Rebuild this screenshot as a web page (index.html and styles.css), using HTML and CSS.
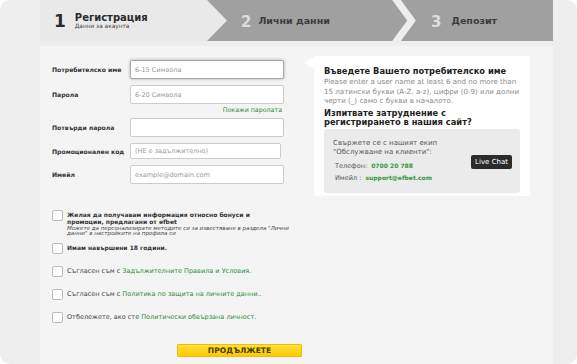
FILE: index.html
```html
<!DOCTYPE html>
<html lang="bg">
<head>
    <meta charset="UTF-8">
    <meta name="viewport" content="width=device-width, initial-scale=1.0">
    <title>Регистрация</title>
    <link rel="stylesheet" href="styles.css">
</head>
<body>
    <div class="modal">
        <div class="wrap">
            <div class="steps">
                <div class="step step-active">
                    <span class="num">1</span>
                    <div>
                        <div class="step-title">Регистрация</div>
                        <div class="step-sub">Данни за акаунта</div>
                    </div>
                </div>
                <div class="step step-two">
                    <span class="num">2</span>
                    <span class="step-title">Лични данни</span>
                </div>
                <svg class="sep" width="26" height="41" viewBox="0 0 26 41">
                    <polyline points="5,-2 21.5,20.5 5,43" fill="none" stroke="#eeeeee" stroke-width="7"/>
                </svg>
                <div class="step step-three">
                    <span class="num">3</span>
                    <span class="step-title">Депозит</span>
                </div>
            </div>

            <div class="panel">
                <div class="top">
                    <div class="fields">
                        <div class="row">
                            <label>Потребителско име</label>
                            <input type="text" class="focused" placeholder="6-15 Символа">
                        </div>
                        <div class="row row-tight">
                            <label>Парола</label>
                            <input type="password" placeholder="6-20 Символа">
                        </div>
                        <div class="show-pass">Покажи паролата</div>
                        <div class="row">
                            <label>Потвърди парола</label>
                            <input type="password">
                        </div>
                        <div class="row">
                            <label>Промоционален код</label>
                            <input type="text" class="short" placeholder="(НЕ е задължително)">
                        </div>
                        <div class="row">
                            <label>Имейл</label>
                            <input type="text" placeholder="example@domain.com">
                        </div>
                    </div>

                    <div class="hint">
                        <h3>Въведете Вашето потребителско име</h3>
                        <p class="hint-text">Please enter a user name at least 6 and no more than 15 латински букви (A-Z, a-z), цифри (0-9) или долни черти (_) само с букви в началото.</p>
                        <h3 class="help-title">Изпитвате затруднение с регистрирането в нашия сайт?</h3>
                        <div class="contact">
                            <div class="contact-info">
                                <p>Свържете се с нашият екип<br>"Обслужване на клиенти":</p>
                                <div class="contact-line">Телефон: <b>0700 20 788</b></div>
                                <div class="contact-line">Имейл : <b>support@efbet.com</b></div>
                            </div>
                            <button class="chat">Live Chat</button>
                        </div>
                    </div>
                </div>

                <div class="checks">
                    <div class="check check-long">
                        <span class="box"></span>
                        <div>
                            <div class="strong">Желая да получавам информация относно бонуси и промоции, предлагани от efbet</div>
                            <div class="note">Можете да персонализирате методите си за известяване в раздела "Лични данни" в настройките на профила си</div>
                        </div>
                    </div>
                    <div class="check">
                        <span class="box"></span>
                        <div class="strong">Имам навършени 18 години.</div>
                    </div>
                    <div class="check">
                        <span class="box"></span>
                        <div>Съгласен съм с <a href="#">Задължителните Правила и Условия.</a></div>
                    </div>
                    <div class="check">
                        <span class="box"></span>
                        <div>Съгласен съм с <a href="#">Политика по защита на личните данни..</a></div>
                    </div>
                    <div class="check">
                        <span class="box"></span>
                        <div>Отбележете, ако сте <a href="#">Политически обвързана личност.</a></div>
                    </div>
                </div>

                <div class="actions">
                    <button class="continue">ПРОДЪЛЖЕТЕ</button>
                </div>
            </div>
        </div>
    </div>
</body>
</html>
```

FILE: styles.css
```css
body {
    margin: 0;
    padding: 0;
    background-color: #ffffff;
    font-family: 'DejaVu Sans', Verdana, sans-serif;
    color: #333333;
}

.modal {
    display: flex;
    width: 577px;
    height: 364px;
    box-sizing: border-box;
    padding: 0 24px 0 40px;
    background-color: #eeeeee;
    border-radius: 10px;
    overflow: hidden;
}

.wrap {
    flex: 1;
    display: flex;
    flex-direction: column;
}

/* steps header */
.steps {
    display: flex;
    height: 41px;
    margin-bottom: 5px;
    background-color: #a0a0a0;
}

.step {
    display: flex;
    align-items: center;
    box-sizing: border-box;
}

.step-active {
    width: 187px;
    padding-left: 14px;
    background-color: #e9e9e9;
    clip-path: polygon(0 0, 167px 0, 187px 50%, 167px 100%, 0 100%);
}

.step-two {
    width: 163px;
    padding-left: 14px;
}

.step-three {
    flex: 1;
    padding-left: 15px;
}

.sep {
    display: block;
}

.num {
    font-size: 15px;
    font-weight: bold;
    color: #dddddd;
    margin-right: 7px;
    padding-top: 3px;
}

.step-three .num {
    margin-right: 10px;
}

.step-active .num {
    color: #2b2b2b;
    font-size: 17px;
    margin-right: 9px;
    padding-top: 0;
}

.step-title {
    font-size: 9.5px;
    font-weight: bold;
    color: #3b3b3b;
}

.step-active .step-title {
    font-size: 10px;
    color: #2b2b2b;
}

.step-sub {
    font-size: 5.8px;
    color: #444444;
}

/* form panel */
.panel {
    flex: 1;
    background-color: #f4f4f4;
    padding: 14px 0 0 12px;
}

.top {
    display: flex;
    align-items: flex-start;
}

.fields {
    width: 232px;
}

.row {
    display: flex;
    align-items: center;
    margin-bottom: 6px;
}

.row-tight {
    margin-bottom: 0;
}

.row label {
    width: 78px;
    font-size: 6.1px;
    font-weight: bold;
    color: #333333;
}

.row input {
    width: 154px;
    height: 19px;
    box-sizing: border-box;
    padding: 0 4px;
    border: 1px solid #cccccc;
    border-radius: 2px;
    background-color: #ffffff;
    font-family: 'DejaVu Sans', Verdana, sans-serif;
    font-size: 6.5px;
    color: #333333;
}

.row input::placeholder {
    color: #9a9a9a;
}

.row input.focused {
    border-color: #aaaaaa;
    box-shadow: 0 0 3px rgba(0, 0, 0, 0.35);
}

.row input.short {
    width: 151px;
    height: 16px;
}

.show-pass {
    text-align: right;
    font-size: 6.3px;
    color: #2e8b3a;
    padding: 2px 2px 0 0;
    height: 10px;
    margin-bottom: 2px;
}

/* hint box */
.hint {
    position: relative;
    width: 216px;
    box-sizing: border-box;
    margin: -4px 0 0 30px;
    padding: 10px 10px 3px 10px;
    background-color: #ffffff;
}

.hint::before {
    content: "";
    position: absolute;
    left: -10px;
    top: 1px;
    border-style: solid;
    border-width: 6px 10px 6px 0;
    border-color: transparent #ffffff transparent transparent;
}

.hint h3 {
    margin: 0;
    font-size: 8.3px;
    color: #222222;
}

.hint-text {
    margin: 1px 0 3px;
    font-size: 7.1px;
    line-height: 9.5px;
    color: #8a8a8a;
}

.help-title {
    line-height: 9.5px;
}

.contact {
    display: flex;
    align-items: center;
    justify-content: space-between;
    margin-top: 1px;
    padding: 10px 8px 9px 9px;
    background-color: #ebebeb;
    border-radius: 3px;
}

.contact p {
    margin: 0 0 3px;
    font-size: 7px;
    line-height: 9px;
    color: #555555;
}

.contact-line {
    font-size: 6.5px;
    line-height: 11px;
    color: #555555;
    padding-left: 2px;
}

.contact-line b {
    color: #2e9a3c;
    margin-left: 2px;
    font-size: 6px;
}

.chat {
    margin-top: 2px;
    padding: 3px 4px;
    border: none;
    border-radius: 2px;
    background-color: #2b2b2b;
    color: #ffffff;
    font-family: 'DejaVu Sans', Verdana, sans-serif;
    font-size: 7px;
}

/* checkboxes */
.checks {
    margin-top: 14px;
}

.check {
    display: flex;
    align-items: flex-start;
    font-size: 6.5px;
    color: #444444;
    margin-bottom: 12px;
}

.check-long {
    margin-bottom: 6px;
}

.check .box {
    flex: none;
    width: 9px;
    height: 9px;
    border: 1px solid #bbbbbb;
    border-radius: 2px;
    background-color: #ffffff;
    margin-right: 4px;
}

.check > div {
    width: 222px;
    padding-top: 1px;
}

.strong {
    font-size: 6px;
    font-weight: bold;
    color: #333333;
    line-height: 7px;
}

.check-long .strong {
    max-width: 212px;
}

.note {
    font-style: italic;
    font-size: 5.5px;
    line-height: 5.5px;
    color: #444444;
    margin-top: 1px;
}

.check a {
    color: #2e8b3a;
    text-decoration: none;
}

.actions {
    padding: 9px 0 0 125px;
}

.continue {
    display: block;
    width: 125px;
    height: 13px;
    padding: 0;
    border: 1px solid #f0c000;
    border-radius: 1px;
    background: linear-gradient(#ffe23a, #ffc800);
    color: #4a3b00;
    font-family: 'DejaVu Sans', Verdana, sans-serif;
    font-size: 7.6px;
    font-weight: bold;
}
```
